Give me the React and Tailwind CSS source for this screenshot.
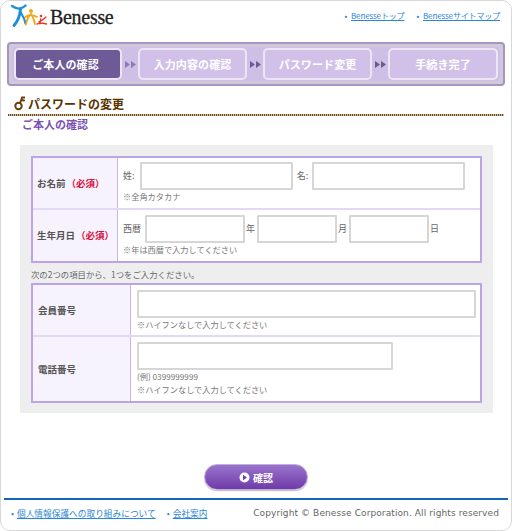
const jp = "font-['Noto_Sans_CJK_JP','Liberation_Sans',sans-serif]";

const steps = [
  { label: 'ご本人の確認', className: 'w-[108px] bg-[#6d5a96] pr-[5px]' },
  { label: '入力内容の確認', className: 'w-[109px] bg-[#d1c1e9]' },
  { label: 'パスワード変更', className: 'w-[109px] bg-[#d1c1e9]' },
  { label: '手続き完了', className: 'w-[110px] bg-[#d1c1e9]' },
];

function Logo() {
  return (
    <svg width="38" height="26" viewBox="0 0 38 26" fill="none" strokeLinecap="round" strokeLinejoin="round">
      <path d="M2 2 C5 4 8 5 10 4.5 C12 4 14 3 15.5 1.5" stroke="#1d8fd8" strokeWidth="2.4" />
      <path d="M10.5 5 C10 11 8 17 4 21.5" stroke="#1d8fd8" strokeWidth="3" />
      <path d="M11 9 C13 12 15 16 15.5 19.5" stroke="#1d8fd8" strokeWidth="2.2" />
      <circle cx="21" cy="7" r="2" fill="#f0a818" />
      <path d="M21 10 C18 13 16.5 17 16 20.5 M21 10 C23 13 24.5 17 25 20 M15.5 13 C18 10.5 23 10.5 27 13" stroke="#f0a818" strokeWidth="1.8" />
      <circle cx="31" cy="12" r="1.3" fill="#e83828" />
      <path d="M27 20 C30 20 31 17 30.5 15 M29 18 C31 17 34 15 36 13 M29.5 19.5 C32 19 34 19 36.5 20" stroke="#e83828" strokeWidth="1.4" />
    </svg>
  );
}

function KeyIcon() {
  return (
    <svg width="11" height="15" viewBox="0 0 11 15" fill="none" stroke="#6b3d0a" strokeWidth="2" strokeLinecap="round">
      <circle cx="4.5" cy="10" r="3.2" />
      <path d="M6 7 L8 2 M8 1.5 L10.5 1.5 M7.5 4 L10 4.5" />
    </svg>
  );
}

function Arrows({ dark }) {
  return (
    <svg width="11" height="7" viewBox="0 0 11 7" className="shrink-0">
      <path d="M0 0 L5 3.5 L0 7 Z M6 0 L11 3.5 L6 7 Z" fill={dark ? '#6d5a8f' : '#8f7ab4'} />
    </svg>
  );
}

function Stepper() {
  return (
    <div className="mx-[6px] mt-[14px] flex h-[44px] items-center rounded-[4px] border-2 border-[#a794c4] bg-[#cfc9d9] px-[3px]">
      <div className="flex h-[34px] w-full items-center gap-[2.5px] bg-[#cdbfe6] px-[2px]">
        {steps.map((s, i) => (
          <div key={s.label} className="contents">
            {i > 0 && <Arrows dark={i > 1} />}
            <div className={`flex h-[32px] shrink-0 items-center justify-center rounded-[5px] border-2 border-[#ece6f4] text-[11px] font-bold tracking-[0.1px] text-white ${s.className}`}>
              {s.label}
            </div>
          </div>
        ))}
      </div>
    </div>
  );
}

function Field({ className = '' }) {
  return <div className={`h-[28px] shrink-0 rounded-[1px] border-2 border-[#d6d6d6] bg-white ${className}`} />;
}

function Note({ children, className = '' }) {
  return <p className={`text-[8.2px] leading-[13px] text-[#777] ${className}`}>{children}</p>;
}

function Label({ children, required, className = '' }) {
  return (
    <div className={`flex shrink-0 items-center border-r border-[#c8b4ea] bg-[#f7f3fe] pl-[4px] text-[9.5px] font-bold text-[#555] ${className}`}>
      {children}
      {required && <span className="ml-[1px] text-[#d8103c]">（必須）</span>}
    </div>
  );
}

function Row({ label, required, labelW, h, pad, last, children }) {
  return (
    <div className={`flex ${h} ${last ? '' : 'border-b-2 border-[#e4d9f5]'}`}>
      <Label required={required} className={labelW}>{label}</Label>
      <div className={`flex-1 bg-white ${pad}`}>{children}</div>
    </div>
  );
}

export default function App() {
  return (
    <div className={`h-[531px] w-[512px] overflow-hidden rounded-[10px] border border-[#d8d8d8] bg-white ${jp}`}>
      {/* header */}
      <div className="flex h-[27px] items-center justify-between pl-[9px] pr-[11px] pt-[4px]">
        <div className="flex items-center gap-[2px]">
          <Logo />
          <span className="font-['Liberation_Serif',serif] text-[20px] leading-none tracking-[-0.3px] text-[#222] [-webkit-text-stroke:0.3px_#222]">Benesse</span>
        </div>
        <div className="-mt-[2px] flex gap-[12px] text-[8px] tracking-[-0.15px] text-[#2b86d6]">
          <span><span className="mr-[4px]">•</span><span className="underline">Benesseトップ</span></span>
          <span><span className="mr-[4px]">•</span><span className="underline">Benesseサイトマップ</span></span>
        </div>
      </div>

      <Stepper />

      {/* page title */}
      <div className="mx-[7px] mt-[9px] h-[21px]">
        <div className="flex h-[19px] items-center gap-[3px] pb-[2px] pl-[6px]">
          <KeyIcon />
          <h1 className="text-[12px] font-bold text-[#5a3300]">パスワードの変更</h1>
        </div>
        <div className="h-[2px] bg-[repeating-linear-gradient(90deg,#6b4a20_0_1px,#cdb998_1px_2px)]" />
      </div>
      <h2 className="ml-[21px] text-[11px] font-bold leading-[16px] text-[#7a52b4]">ご本人の確認</h2>

      {/* form panel */}
      <div className="ml-[19px] mr-[18px] mt-[13px] h-[268px] bg-[#eeeeee] px-[11px] pt-[11px]">
        <div className="border-2 border-[#bda4e6]">
          <Row label="お名前" required labelW="w-[85px]" h="h-[52px]" pad="pl-[5px] pt-[4px]">
            <div className="flex items-center text-[9px] text-[#666]">
              <span className="w-[17px]">姓:</span>
              <Field className="w-[153px]" />
              <span className="w-[19px] text-center">名:</span>
              <Field className="w-[153px]" />
            </div>
            <Note>※全角カタカナ</Note>
          </Row>
          <Row label="生年月日" required labelW="w-[85px]" h="h-[51px]" pad="pl-[5px] pt-[5px]" last>
            <div className="flex items-center text-[9px] text-[#666]">
              <span className="w-[22px]">西暦</span>
              <Field className="w-[100px]" />
              <span className="w-[12px] pl-[1px]">年</span>
              <Field className="w-[80px]" />
              <span className="w-[12px] pl-[1px]">月</span>
              <Field className="w-[80px]" />
              <span className="pl-[1px]">日</span>
            </div>
            <Note>※年は西暦で入力してください</Note>
          </Row>
        </div>

        <p className="h-[20px] text-[8.4px] leading-[22px] text-[#666]">次の2つの項目から、1つをご入力ください。</p>

        <div className="border-2 border-[#bda4e6]">
          <Row label="会員番号" labelW="w-[98px] pl-[5px]" h="h-[52px]" pad="pl-[6px] pt-[5px]">
            <Field className="w-[339px]" />
            <Note>※ハイフンなしで入力してください</Note>
          </Row>
          <Row label="電話番号" labelW="w-[98px] pl-[5px]" h="h-[64px]" pad="pl-[6px] pt-[5px]" last>
            <Field className="w-[256px]" />
            <Note>(例) 0399999999</Note>
            <Note>※ハイフンなしで入力してください</Note>
          </Row>
        </div>
      </div>

      {/* submit */}
      <div className="mt-[51px] flex justify-center">
        <button className="flex h-[26px] w-[104px] items-center justify-center gap-[3px] rounded-full border border-[#c3aee0] bg-gradient-to-b from-[#9a74cc] to-[#6f3aa8] text-[10px] font-bold text-white shadow-[0_1px_1px_#bbb]">
          <svg width="11" height="11" viewBox="0 0 11 11">
            <circle cx="5.5" cy="5.5" r="5" fill="#fff" />
            <path d="M4 2.8 L8 5.5 L4 8.2 Z" fill="#6f3aa8" />
          </svg>
          確認
        </button>
      </div>

      {/* footer */}
      <div className="mx-[3px] mt-[8px] flex items-center justify-between border-t-2 border-[#1565b8] pl-[7px] pr-[9px] pt-[7px]">
        <div className="flex gap-[11px] text-[8.7px] text-[#2b86d6]">
          <span><span className="mr-[3px]">•</span><span className="underline">個人情報保護への取り組みについて</span></span>
          <span><span className="mr-[3px]">•</span><span className="underline">会社案内</span></span>
        </div>
        <span className="font-['DejaVu_Sans',sans-serif] text-[9px] tracking-[0.1px] text-[#666]">Copyright © Benesse Corporation. All rights reserved</span>
      </div>
    </div>
  );
}
